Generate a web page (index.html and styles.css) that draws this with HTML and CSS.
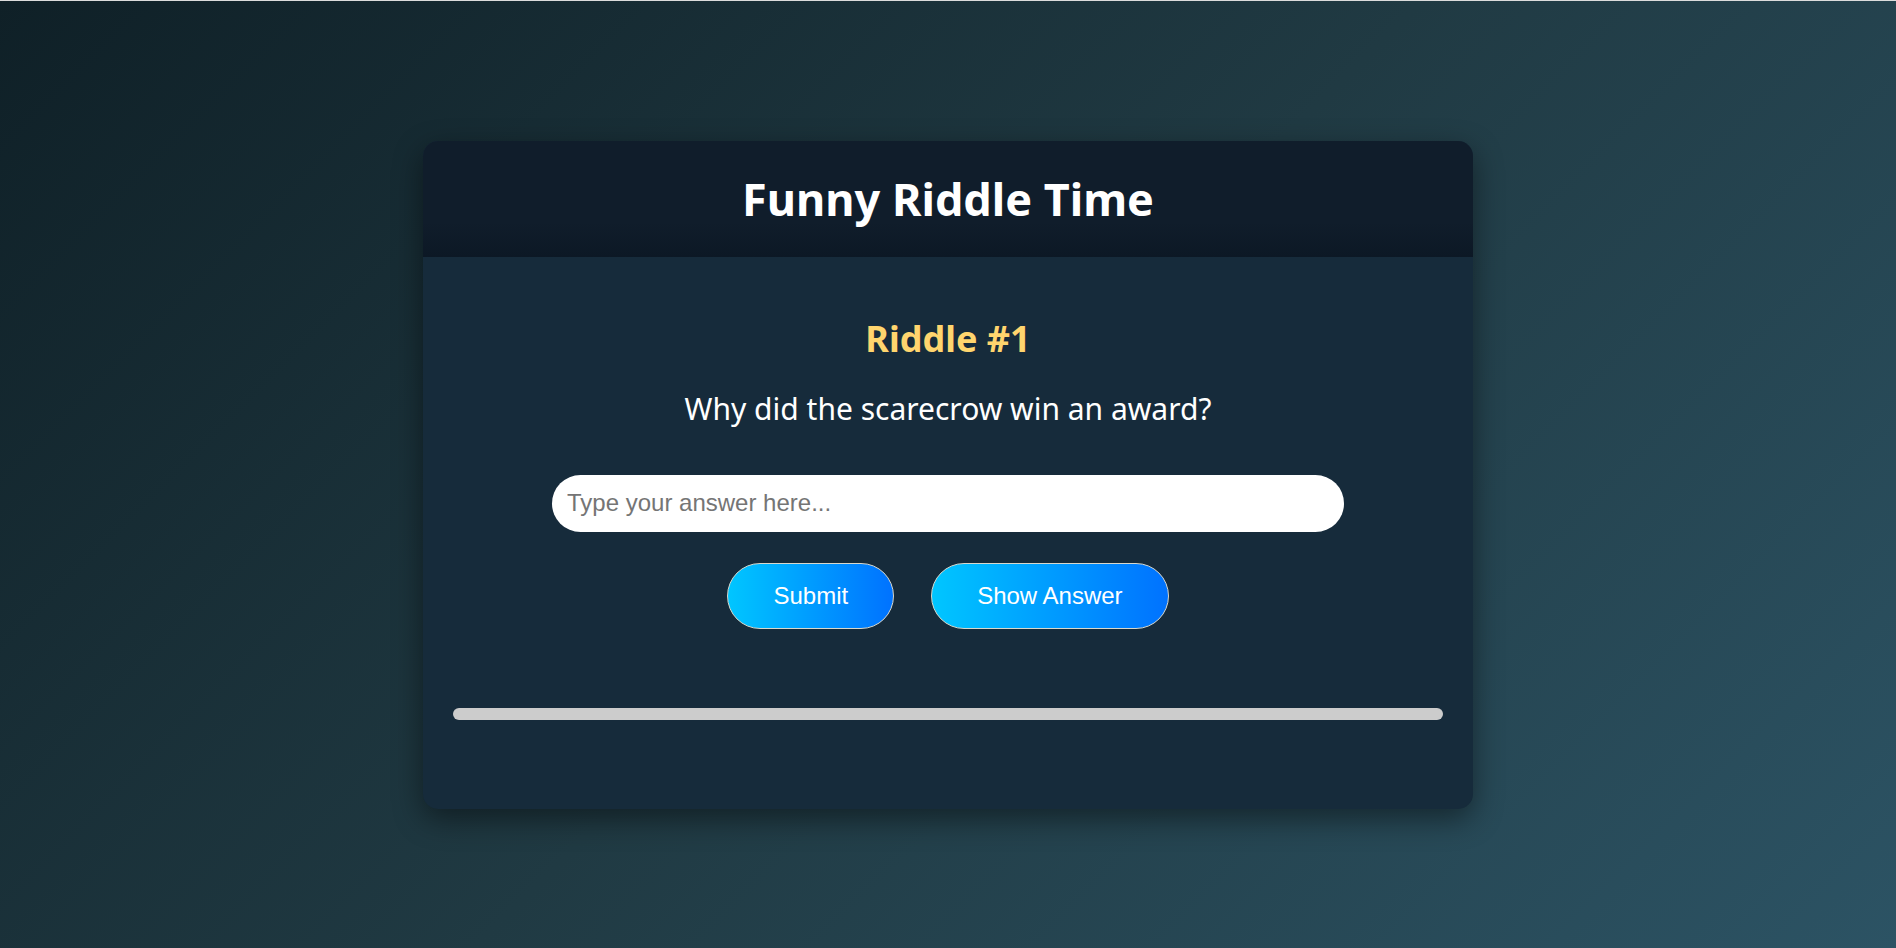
FILE: index.html
```html
<!DOCTYPE html>
<html lang="en">
<head>
<meta charset="utf-8">
<title>Funny Riddle Time</title>
<link rel="stylesheet" href="styles.css">
</head>
<body>
<main class="card">
  <header class="card-header">
    <h1 class="title">Funny Riddle Time</h1>
  </header>
  <section class="card-body">
    <h2 class="riddle-num">Riddle #1</h2>
    <p class="question">Why did the scarecrow win an award?</p>
    <input class="answer" type="text" placeholder="Type your answer here...">
    <div class="actions">
      <button class="btn">Submit</button>
      <button class="btn">Show Answer</button>
    </div>
    <div class="progress"><div class="progress-fill" style="width:0%"></div></div>
  </section>
</main>
</body>
</html>
```
FILE: styles.css
```css
html, body { height: 100%; }
body {
  margin: 0;
  border-top: 1px solid #dcdcdc;
  box-sizing: border-box;
  min-height: 100vh;
  background: linear-gradient(135deg, #0f2027, #203a43, #2c5364);
  display: flex;
  align-items: center;
  justify-content: center;
  font-family: "Noto Sans", "Lato", sans-serif;
}
.card {
  width: 1050px;
  background: #162b3b;
  border-radius: 15px;
  overflow: hidden;
  box-shadow: 0 10px 30px rgba(0, 0, 0, 0.45);
}
.card-header {
  background: linear-gradient(#101d2b 0%, #101d2b 70%, #0c1825 100%);
  height: 116px;
  display: flex;
  align-items: center;
  justify-content: center;
}
.title {
  margin: 0;
  color: #fff;
  font-size: 45px;
  font-weight: 700;
}
.card-body {
  padding: 60px 30px 89px;
  display: flex;
  flex-direction: column;
  align-items: center;
}
.riddle-num {
  margin: 0;
  color: #ffd56e;
  font-size: 36px;
  font-weight: 700;
  line-height: 44px;
}
.question {
  margin: 30px 0 0;
  color: #fff;
  font-size: 30px;
  line-height: 36px;
}
.answer {
  margin-top: 48px;
  width: 80%;
  box-sizing: border-box;
  height: 57px;
  border: none;
  border-radius: 30px;
  padding: 0 15px;
  font-family: "Liberation Sans", Arial, sans-serif;
  font-size: 24px;
  color: #333;
  background: #fff;
  outline: none;
}
.answer::placeholder { color: #757575; }
.actions {
  margin-top: 31px;
  display: flex;
  gap: 37px;
}
.btn {
  height: 66px;
  padding: 0 45px;
  border: 1px solid #d8d8cc;
  border-radius: 33px;
  background: linear-gradient(90deg, #00c6ff, #0072ff);
  color: #fff;
  font-family: "Liberation Sans", Arial, sans-serif;
  font-size: 24px;
}
.progress {
  margin-top: 79px;
  align-self: stretch;
  height: 12px;
  border-radius: 6px;
  background: #cccccc;
  overflow: hidden;
}
.progress-fill { height: 100%; background: #4caf50; }
```
